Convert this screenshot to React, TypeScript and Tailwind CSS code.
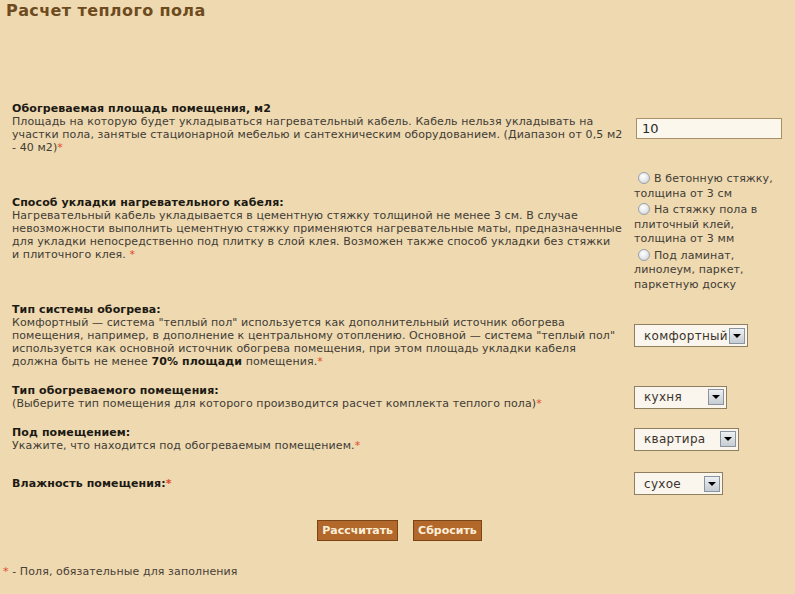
import * as React from 'react';

const Star = () => <span className="text-[#e14a2c]">*</span>;

function Radio() {
  return (
    <span className="mr-[4px] ml-[4px] inline-block h-[12px] w-[12px] rounded-full border border-[#9aa1a8] bg-[radial-gradient(circle_at_40%_35%,#ffffff_0%,#e9ebed_45%,#c3c8cd_100%)] align-[-2px]" />
  );
}

function FakeSelect({ value, width }: { value: string; width: string }) {
  return (
    <div
      className={`flex h-[23px] items-center justify-between border border-[#8f7f61] bg-[#faf6ee] pl-[9px] pr-[2px] text-[12px] tracking-[0.3px] text-[#3a342c] ${width}`}
    >
      <span className="leading-none">{value}</span>
      <span className="flex h-[16px] w-[16px] items-center justify-center border border-[#8a949e] bg-[linear-gradient(#eef0f2,#c6ccd2)]">
        <span className="h-0 w-0 border-x-[4px] border-t-[4px] border-x-transparent border-t-black" />
      </span>
    </div>
  );
}

function Row({
  label,
  children,
  control,
  className,
  leftClass,
}: {
  label: React.ReactNode;
  children?: React.ReactNode;
  control: React.ReactNode;
  className?: string;
  leftClass?: string;
}) {
  return (
    <div className={`flex items-center ${className ?? ''}`}>
      <div className={`w-[610px] shrink-0 whitespace-nowrap ${leftClass ?? ''}`}>
        <div className="font-bold text-[#1d1913]">{label}</div>
        {children ? <div>{children}</div> : null}
      </div>
      <div className="ml-[12px]">{control}</div>
    </div>
  );
}

export default function App() {
  return (
    <div className="min-h-[594px] bg-[#eed9b1] font-['DejaVu_Sans',Verdana,sans-serif] text-[11px] leading-[13px] tracking-[0.1px] text-[#423c34]">
      <h1 className="pl-[6px] pt-[1px] text-[16px] font-bold leading-[20px] tracking-[0.4px] text-[#6d4b1e]">
        Расчет теплого пола
      </h1>

      <div className="mt-[81px] pl-[12px] pr-[10px]">
        <Row
          label="Обогреваемая площадь помещения, м2"
          control={
            <div className="ml-[2px] flex h-[21px] w-[146px] items-center border border-[#a99066] bg-[#fbf7ed] pl-[5px] text-[13px] text-[#2c2824]">
              10
            </div>
          }
        >
          Площадь на которую будет укладываться нагревательный кабель. Кабель нельзя укладывать на
          <br />
          участки пола, занятые стационарной мебелью и сантехническим оборудованием. (Диапазон от 0,5 м2
          <br />- 40 м2)
          <Star />
        </Row>

        <Row
          className="mt-[18px]"
          leftClass="pb-[8px]"
          label="Способ укладки нагревательного кабеля:"
          control={
            <div className="flex flex-col gap-[2px] whitespace-nowrap leading-[14.5px]">
              <div>
                <Radio />В бетонную стяжку,
                <br />
                толщина от 3 см
              </div>
              <div>
                <Radio />На стяжку пола в
                <br />
                плиточный клей,
                <br />
                толщина от 3 мм
              </div>
              <div>
                <Radio />Под ламинат,
                <br />
                линолеум, паркет,
                <br />
                паркетную доску
              </div>
            </div>
          }
        >
          Нагревательный кабель укладывается в цементную стяжку толщиной не менее 3 см. В случае
          <br />
          невозможности выполнить цементную стяжку применяются нагревательные маты, предназначенные
          <br />
          для укладки непосредственно под плитку в слой клея. Возможен также способ укладки без стяжки
          <br />и плиточного клея. <Star />
        </Row>

        <Row
          className="mt-[11px]"
          label="Тип системы обогрева:"
          control={<FakeSelect value="комфортный" width="w-[114px]" />}
        >
          Комфортный — система "теплый пол" используется как дополнительный источник обогрева
          <br />
          помещения, например, в дополнение к центральному отоплению. Основной — система "теплый пол"
          <br />
          используется как основной источник обогрева помещения, при этом площадь укладки кабеля
          <br />
          должна быть не менее <b className="text-[#1d1913]">70% площади</b> помещения.
          <Star />
        </Row>

        <Row
          className="mt-[16px]"
          label="Тип обогреваемого помещения:"
          control={<FakeSelect value="кухня" width="w-[93px]" />}
        >
          (Выберите тип помещения для которого производится расчет комплекта теплого пола)
          <Star />
        </Row>

        <Row
          className="mt-[16px]"
          label="Под помещением:"
          control={<FakeSelect value="квартира" width="w-[105px]" />}
        >
          Укажите, что находится под обогреваемым помещением.
          <Star />
        </Row>

        <Row
          className="mt-[20px]"
          label={
            <>
              Влажность помещения:
              <Star />
            </>
          }
          control={<FakeSelect value="сухое" width="w-[89px]" />}
        />

        <div className="mt-[25px] flex justify-center gap-[15px] pl-[2px]">
          <button className="h-[21px] border border-[#7b4416] bg-[#b3682b] px-[4px] text-[11px] font-bold tracking-normal text-[#fcefd8]">
            Рассчитать
          </button>
          <button className="h-[21px] border border-[#7b4416] bg-[#b3682b] px-[4px] text-[11px] font-bold tracking-normal text-[#fcefd8]">
            Сбросить
          </button>
        </div>
      </div>

      <div className="mt-[24px] pl-[3px] text-[#4a4036]">
        <Star /> - Поля, обязательные для заполнения
      </div>
    </div>
  );
}
